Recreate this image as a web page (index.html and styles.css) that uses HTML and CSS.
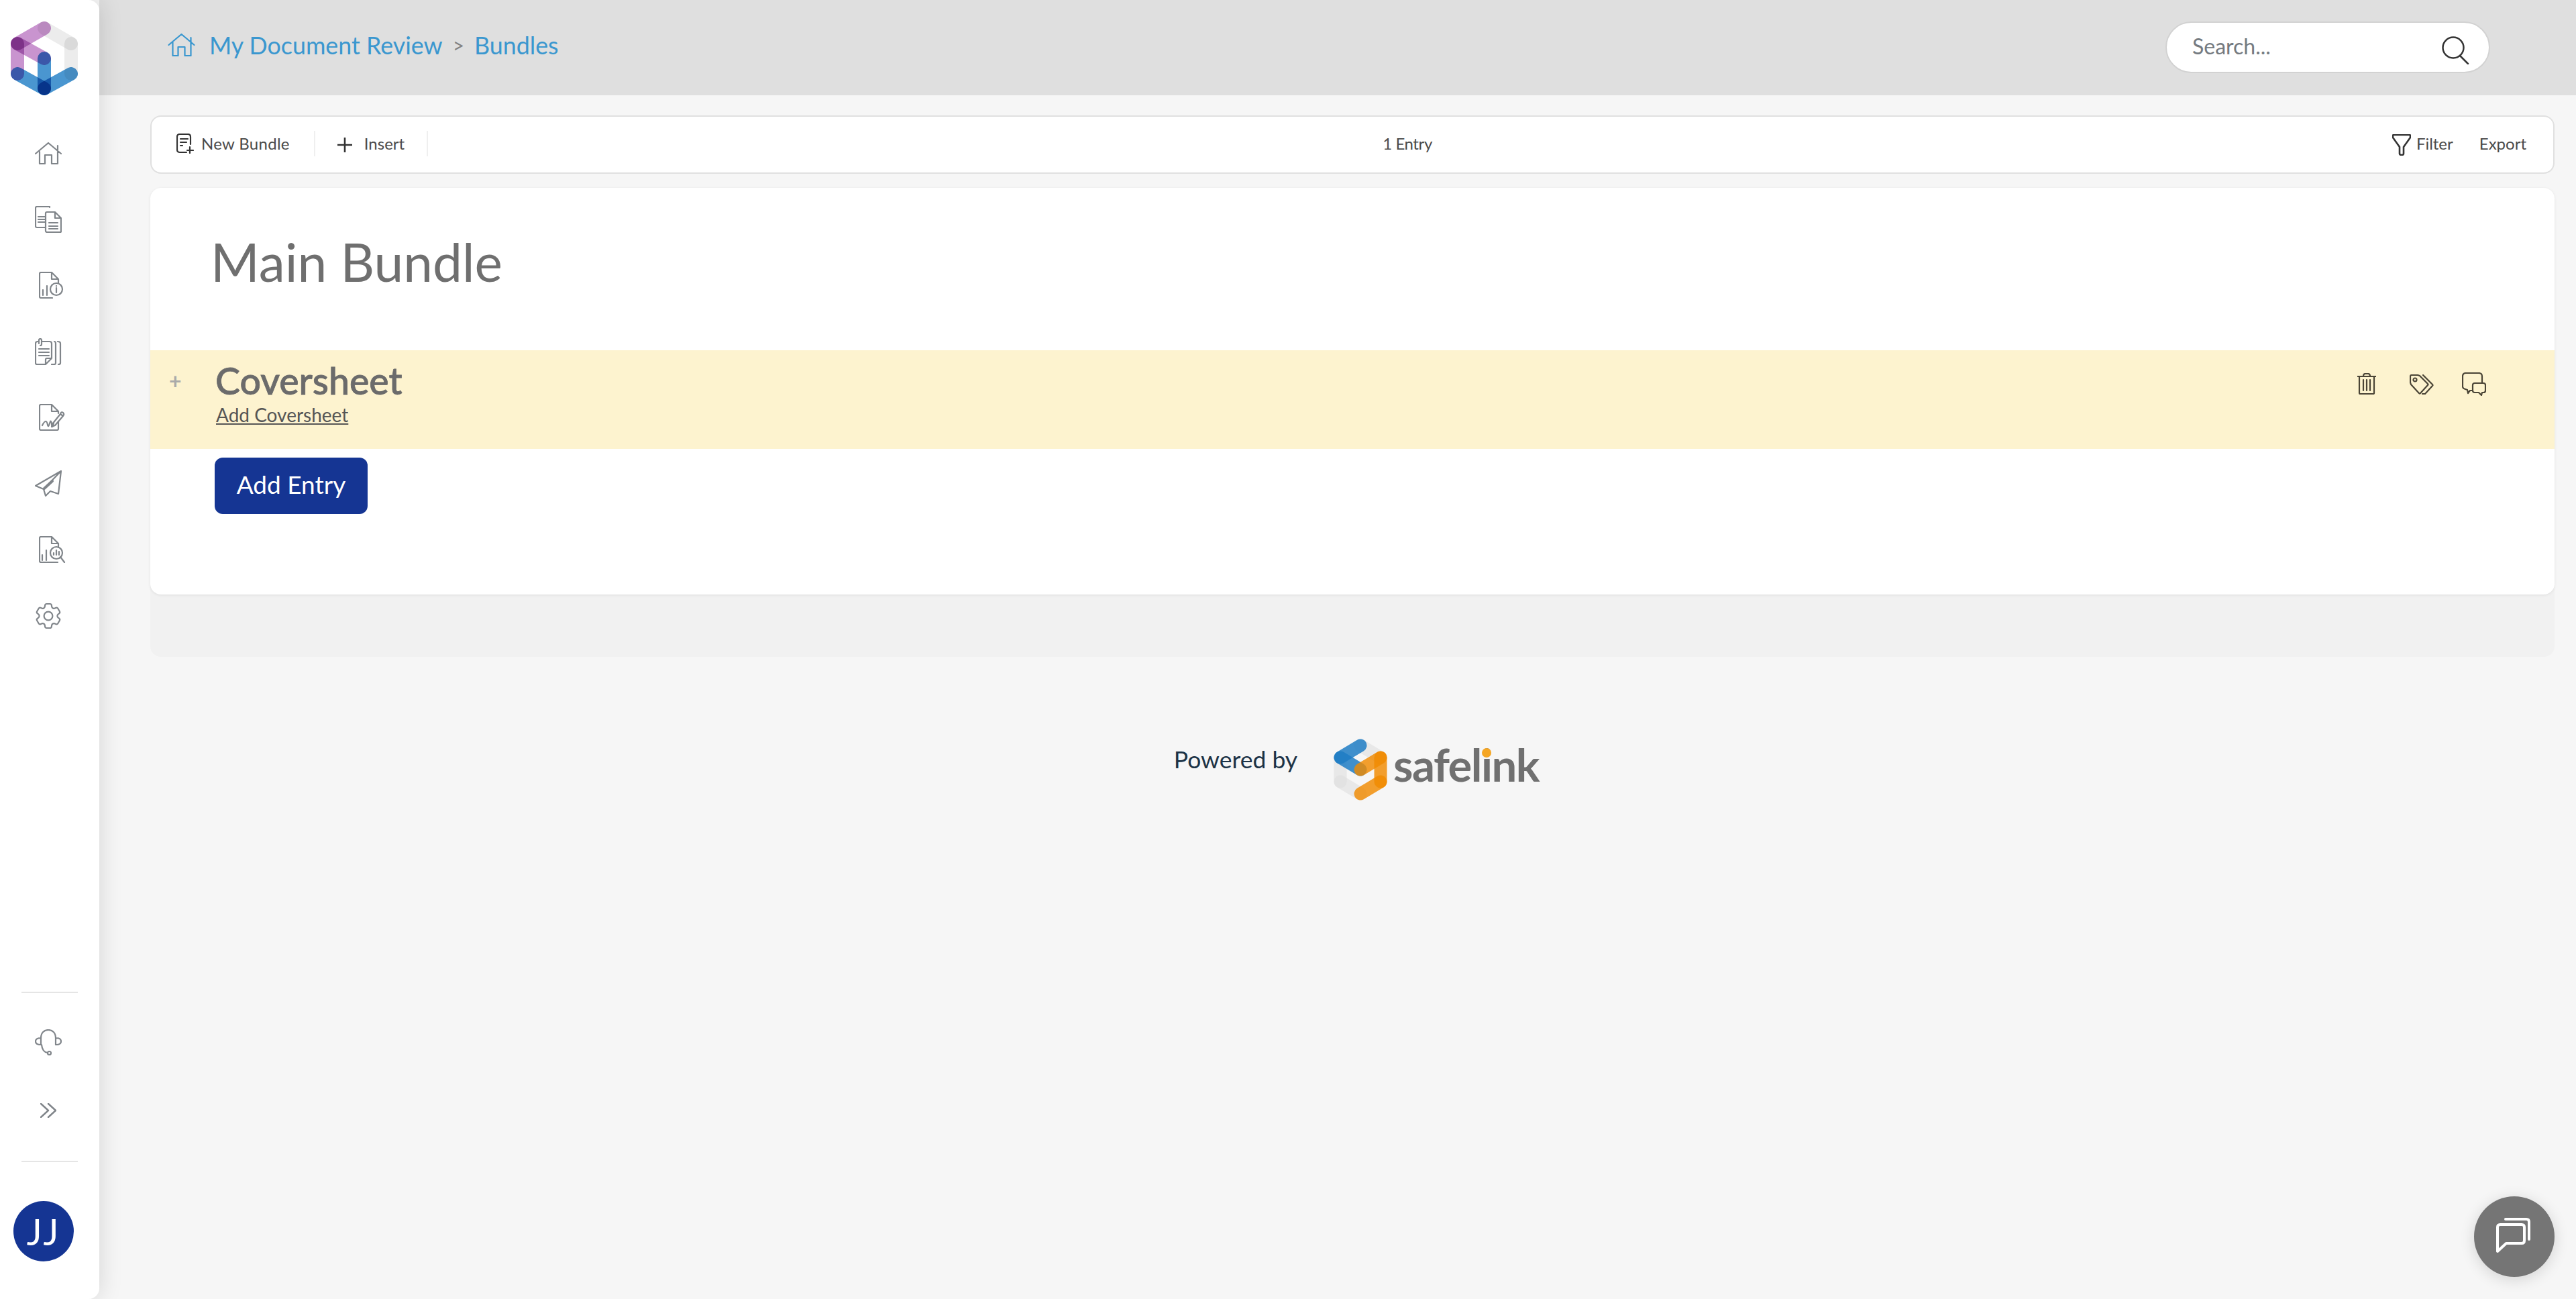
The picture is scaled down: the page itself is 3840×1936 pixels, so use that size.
FILE: index.html
```html
<!DOCTYPE html>
<html lang="en">
<head>
<meta charset="utf-8">
<title>Bundles</title>
<link rel="stylesheet" href="styles.css">
</head>
<body>
<aside class="sidebar">
  <svg class="logo" viewBox="0 0 132 140" fill="none" stroke-linecap="round" stroke-width="20">
    <path class="lg-grey" d="M66 32 106 55"/><path class="lg-grey" d="M106 55V100"/>
    <path class="lg-purple" d="M66 32 26 55"/><path class="lg-purple" d="M26 55 66 77"/><path class="lg-purple" d="M26 55V100"/>
    <path class="lg-blue" d="M26 100 66 122"/><path class="lg-blue" d="M66 77V122"/><path class="lg-blue" d="M106 100 66 122"/>
  </svg>
  <nav class="side-nav">
    <svg class="side-icon" viewBox="0 0 40 40"><path d="M1 21 20 5l19 16M34 9v8M7 18v18h8V23h10v13h9V18"/></svg>
    <svg class="side-icon" viewBox="0 0 40 40"><path d="M22 2V1H3Q1 1 1 3v27q0 2 2 2h13"/><path d="M5 16h10M5 20h10M5 24h10"/><path d="M18 9h12l9 9v20q0 1-1 1H18q-2 0-2-2V11q0-2 2-2zM30 9v9h9M21 25h13M21 30h13M21 34h13"/></svg>
    <svg class="side-icon side-icon-shift" viewBox="0 0 40 40"><path d="M20 39H3q-2 0-2-2V3q0-2 2-2h16l10 10v6M19 1v10h10M6 35v-8M12 35V21"/><circle cx="26" cy="26" r="9"/><path d="M26 24v7M26 21v.5"/></svg>
    <svg class="side-icon" viewBox="0 0 40 40"><path d="M11 5h11q3 0 3 3v22l-9 9H3q-2 0-2-2V8q0-3 3-3h1M25 30h-7q-2 0-2 2v7"/><path d="M6 8V3q0-2 2-2t2 2v6q0 2-2 2M6 16h15M6 21h15M6 26h15"/><path d="M25 39h4q2 0 2-2V8q0-3-2-3M34 5q4 0 4 3v29q0 2-3 2"/></svg>
    <svg class="side-icon side-icon-shift" viewBox="0 0 40 40"><path d="M29 26v11q0 2-2 2H3q-2 0-2-2V3q0-2 2-2h16l10 10v3M19 1v10h10"/><path d="M5 32q3-6 5-6t3 5 3-2 3 1 3-1"/><path d="M20 30 32 15l4 3-12 14-5 2zM32 15q1-4 4-2 3 3-1 5"/></svg>
    <svg class="side-icon" viewBox="0 0 40 40"><path d="M39 1 1 23l12 5 3 10 7-7 12 4zM39 1 13 28"/><path class="icon-thick" d="M26 16 14 27"/></svg>
    <svg class="side-icon side-icon-shift" viewBox="0 0 40 40"><path d="M28 39H3q-2 0-2-2V3q0-2 2-2h16l10 10v6M19 1v10h10M5 36v-8M11 36V21"/><circle cx="26" cy="25" r="9"/><path d="M22 28v-3M26 28v-7M30 28v-5M32 31l6 8"/></svg>
    <svg class="side-icon" viewBox="2 2 20 20"><path class="gear" d="M9.594 3.94c.09-.542.56-.94 1.11-.94h2.593c.55 0 1.02.398 1.11.94l.213 1.281c.063.374.313.686.645.87.074.04.147.083.22.127.325.196.72.257 1.075.124l1.217-.456a1.125 1.125 0 0 1 1.37.49l1.296 2.247a1.125 1.125 0 0 1-.26 1.431l-1.003.827c-.293.241-.438.613-.43.992a7.723 7.723 0 0 1 0 .255c-.008.378.137.75.43.991l1.004.827c.424.35.534.955.26 1.43l-1.298 2.247a1.125 1.125 0 0 1-1.369.491l-1.217-.456c-.355-.133-.75-.072-1.076.124a6.47 6.47 0 0 1-.22.128c-.331.183-.581.495-.644.869l-.213 1.281c-.09.543-.56.94-1.11.94h-2.594c-.55 0-1.019-.398-1.11-.94l-.213-1.281c-.062-.374-.312-.686-.644-.87a6.52 6.52 0 0 1-.22-.127c-.325-.196-.72-.257-1.076-.124l-1.217.456a1.125 1.125 0 0 1-1.369-.49l-1.297-2.247a1.125 1.125 0 0 1 .26-1.431l1.004-.827c.292-.24.437-.613.43-.991a6.932 6.932 0 0 1 0-.255c.007-.38-.138-.751-.43-.992l-1.004-.827a1.125 1.125 0 0 1-.26-1.43l1.297-2.247a1.125 1.125 0 0 1 1.37-.491l1.216.456c.356.133.751.072 1.076-.124.072-.044.146-.086.22-.128.332-.183.582-.495.644-.869l.214-1.28Z"/><circle class="gear" cx="12" cy="12" r="3.2"/></svg>
  </nav>
  <div class="side-bottom">
    <hr class="side-rule">
    <svg class="side-icon headset" viewBox="0 0 40 40"><path d="M9 13C9 5 14 1 20 1s11 4 11 12M9 13v10q-8 0-8-5t8-5zM31 13v10h1q7 0 7-5t-7-5zM10 23q1 11 9 12"/><circle cx="21.500" cy="35.500" r="2.500"/></svg>
    <svg class="chevrons" viewBox="0 0 24 22"><path d="M1 1l11 10L1 21M12 1l11 10-11 10"/></svg>
    <hr class="side-rule side-rule-low">
    <div class="avatar">JJ</div>
  </div>
</aside>

<div class="main">
  <header class="topbar">
    <nav class="crumbs">
      <svg class="crumb-home" viewBox="0 0 40 34"><path d="M1 17 20 1l19 16M34 6v8M7 13v20h8V20h10v13h9V13"/></svg>
      <a class="crumb-link">My Document Review</a>
      <span class="crumb-sep">&gt;</span>
      <a class="crumb-link">Bundles</a>
    </nav>
    <div class="search">
      <span class="search-text">Search...</span>
      <svg class="search-icon" viewBox="0 0 42 42"><circle cx="17" cy="17" r="15.500"/><path d="M27 29l12 12"/></svg>
    </div>
  </header>

  <div class="content">
    <div class="toolbar">
      <div class="tool-group">
        <button class="tool tool-new">
          <svg class="tool-svg-new" viewBox="0 0 26 30"><path d="M15 28H5q-4 0-4-4V5q0-4 4-4h12q4 0 4 4v11M6 8h11M6 13h9M6 18h3M20 20v9M16 25h9"/></svg>
          New Bundle
        </button>
        <button class="tool tool-insert">
          <svg class="tool-svg-plus" viewBox="0 0 22 22"><path d="M11 0v22M0 11h22"/></svg>
          Insert
        </button>
      </div>
      <div class="tool-count">1 Entry</div>
      <div class="tool-group tool-group-right">
        <button class="tool tool-filter">
          <svg class="tool-svg-filter" viewBox="0 0 28 32"><path d="M2 1h24q1 0 1 2v2L17 19v10q0 2-3 2t-3-2V19L1 5V3q0-2 1-2z"/></svg>
          Filter
        </button>
        <button class="tool tool-export">Export</button>
      </div>
    </div>

    <div class="sheet-stack">
      <section class="sheet">
        <h1 class="sheet-title">Main Bundle</h1>
        <div class="cover-row">
          <span class="cover-plus">+</span>
          <div class="cover-text">
            <h2 class="cover-title">Coversheet</h2>
            <a class="cover-link">Add Coversheet</a>
          </div>
          <div class="cover-actions">
            <svg class="act-trash" viewBox="0 0 28 32"><path d="M0 5h28M3 5v25q0 1 1 1h20q1 0 1-1V5M9 5q0-4 3-4h4q3 0 3 4M9 10v16M14 10v16M19 10v16"/></svg>
            <svg class="act-tags" viewBox="0 0 36 30"><path d="M3 1h9l3 1 12 12q1 1 0 2L16 28q-1 1-2 0L2 15 1 12V3q0-2 2-2z"/><circle cx="8" cy="8" r="2.500"/><path d="M20 1l14 14q1 1 0 2L23 29h-4"/></svg>
            <svg class="act-chat" viewBox="0 0 36 36"><path d="M15 27h-3l-3 4-1-5-3-1q-4-1-4-4V6q0-5 5-5h19q5 0 5 5v10"/><path d="M19 16h13q3 0 3 3v8q0 3-3 3h-2l-1 4-4-4h-6q-3 0-3-3v-8q0-3 3-3z"/></svg>
          </div>
        </div>
        <button class="add-entry">Add Entry</button>
      </section>
    </div>

    <footer class="powered">
      <span class="powered-text">Powered by</span>
      <svg class="safelink-mark" viewBox="0 0 80 92" fill="none" stroke-linecap="round" stroke-width="19">
        <path class="sl-grey" d="M40 10 70 28"/><path class="sl-grey" d="M10 28V64"/><path class="sl-grey" d="M10 64 40 82"/>
        <path class="sl-blue" d="M40 10 10 28"/><path class="sl-blue" d="M10 28 40 46"/>
        <path class="sl-orange" d="M40 46 70 28"/><path class="sl-orange" d="M70 28V64"/><path class="sl-orange" d="M70 64 40 82"/>
      </svg>
      <span class="safelink-word">safelink<i class="safelink-dot"></i></span>
    </footer>
  </div>
</div>

<button class="chat-fab" aria-label="Chat">
  <svg class="chat-fab-icon" viewBox="0 0 56 56"><path d="M15 2h31q4 0 4 4v26M3 50V14q0-4 4-4h32q4 0 4 4v20q0 4-4 4H16z"/></svg>
</button>
</body>
</html>
```
FILE: styles.css
```css
* { box-sizing: border-box; }
html, body { margin: 0; height: 100%; }
body {
  display: flex;
  height: 1936px;
  overflow: hidden;
  position: relative;
  background: #f6f6f6;
  font-family: "Lato", "Open Sans", sans-serif;
  color: #4a4a4a;
}

/* sidebar */
.sidebar {
  width: 148px;
  flex: none;
  display: flex;
  flex-direction: column;
  background: #fff;
  border-radius: 0 16px 16px 0;
  box-shadow: 0 0 36px rgba(0, 0, 0, .14);
  z-index: 2;
  position: relative;
}
.logo { display: block; width: 132px; height: 140px; margin-top: 10px; flex: none; }
.lg-grey { stroke: #ececec; mix-blend-mode: multiply; }
.lg-purple { stroke: #c994cf; mix-blend-mode: multiply; }
.lg-blue { stroke: #4a96d0; mix-blend-mode: multiply; }
.side-nav { display: flex; flex-direction: column; align-items: flex-start; gap: 58.500px; padding: 58px 0 0 52px; }
.side-icon { display: block; width: 40px; height: 40px; fill: none; stroke: #80858a; stroke-width: 2.200; stroke-linejoin: round; stroke-linecap: round; }
.side-icon-shift { margin-left: 6px; }
.icon-thick { stroke-width: 4; }
.gear { stroke-width: 1.100; }
.side-bottom { margin-top: auto; display: flex; flex-direction: column; align-items: flex-start; padding: 0 0 56px 0; }
.side-rule { width: 84px; height: 2px; margin: 0 0 0 32px; border: 0; background: #e5e5e5; }
.headset { margin: 54px 0 0 52px; }
.chevrons { display: block; width: 24px; height: 22px; margin: 70px 0 0 60px; fill: none; stroke: #80858a; stroke-width: 2.400; stroke-linecap: round; stroke-linejoin: round; }
.side-rule-low { margin-top: 64px; }
.avatar { width: 90px; height: 90px; margin: 58px 0 0 20px; border-radius: 50%; background: #153593; color: #fff; font-size: 54px; letter-spacing: 3px; display: flex; align-items: center; justify-content: center; }

/* main */
.main { flex: 1; min-width: 0; display: flex; flex-direction: column; }
.topbar { height: 142px; flex: none; background: #dfdfdf; display: flex; align-items: flex-start; justify-content: space-between; padding: 32px 128px 0 102px; }
.crumbs { display: flex; align-items: center; height: 70px; }
.crumb-home { width: 41px; height: 34px; margin-right: 21px; fill: none; stroke: #3a97cf; stroke-width: 2.200; stroke-linejoin: round; stroke-linecap: round; }
.crumb-link { font-size: 35.800px; color: #3a97cf; }
.crumb-sep { font-size: 30px; color: #808080; margin: 0 15px; }
.search { width: 484px; height: 77px; display: flex; align-items: center; justify-content: space-between; padding: 0 28px 4px 38px; background: #fff; border: 2px solid #d2d2d2; border-radius: 39px; }
.search-text { font-size: 32px; color: #747a80; }
.search-icon { width: 42px; height: 42px; margin-top: 12px; fill: none; stroke: #333; stroke-width: 2.500; stroke-linecap: round; }

.content { flex: 1; padding: 30px 32px 0 76px; display: flex; flex-direction: column; }
.toolbar { height: 87px; flex: none; display: flex; align-items: center; background: #fff; border: 2px solid #e0e0e0; border-radius: 16px; padding: 0 38px 4px 37px; }
.tool-group { display: flex; align-items: center; }
.tool { display: flex; align-items: center; height: 38px; padding: 0; border: 0; background: none; font-family: inherit; font-size: 24px; color: #4a4a4a; }
.tool-new { padding-right: 36px; border-right: 2px solid #efefef; letter-spacing: .3px; }
.tool-svg-new { width: 26px; height: 30px; margin-right: 11px; fill: none; stroke: #333; stroke-width: 2.200; stroke-linecap: round; stroke-linejoin: round; }
.tool-insert { padding: 0 33px; border-right: 2px solid #efefef; }
.tool-svg-plus { width: 22px; height: 22px; margin: 4px 18px 0 0; fill: none; stroke: #333; stroke-width: 2.600; }
.tool-count { flex: 1; padding-right: 8px; text-align: center; font-size: 24px; letter-spacing: -.4px; color: #4a4a4a; }
.tool-svg-filter { width: 28px; height: 32px; margin: 4px 8px 0 0; fill: none; stroke: #333; stroke-width: 2.600; stroke-linejoin: round; }
.tool-export { margin-left: 39px; padding-right: 2px; }

.sheet-stack { margin-top: 21px; padding-bottom: 93px; background: #f1f1f1; border-radius: 16px; }
.sheet { height: 606px; background: #fff; border-radius: 16px; box-shadow: 0 1px 4px rgba(0, 0, 0, .08); overflow: hidden; }
.sheet-title { height: 242px; margin: 0; padding: 65px 0 0 90px; font-size: 78.500px; line-height: 90px; font-weight: 400; color: #6f6f6f; }
.cover-row { height: 147px; display: flex; background: #fdf3cf; position: relative; }
.cover-plus { width: 97px; padding: 28px 0 0 28px; font-size: 32px; line-height: 36px; font-weight: 700; color: #aaa; flex: none; }
.cover-text { flex: 1; padding-top: 15px; }
.cover-title { margin: 0; font-size: 55.500px; line-height: 60px; font-weight: 500; color: #6b6b6b; -webkit-text-stroke: .8px #6b6b6b; }
.cover-link { display: inline-block; margin: 4px 0 0 1px; font-size: 28px; line-height: 34px; color: #555; text-decoration: underline; }
.cover-actions { display: flex; align-items: flex-start; padding: 33px 102px 0 0; }
.act-trash, .act-tags, .act-chat { fill: none; stroke: #4a4436; stroke-width: 2.200; stroke-linejoin: round; stroke-linecap: round; }
.act-trash { width: 28px; height: 32px; margin-top: 1px; }
.act-tags { width: 36px; height: 30px; margin: 3px 0 0 50px; }
.act-chat { width: 36px; height: 36px; margin-left: 42px; }
.add-entry { display: block; width: 228px; height: 84px; margin: 13px 0 0 96px; padding: 0 0 6px; border: 0; border-radius: 12px; background: #153593; color: #fff; font-family: inherit; font-size: 37px; }

.powered { display: flex; align-items: flex-start; justify-content: center; margin-top: 122px; padding-left: 12px; }
.powered-text { font-size: 35.500px; line-height: 40px; margin-top: 11px; color: #1c3347; }
.safelink-mark { width: 80px; height: 92px; margin-left: 54px; flex: none; }
.sl-grey { stroke: #dcdcdc; stroke-opacity: .55; }
.sl-blue { stroke: #1f7cc4; stroke-opacity: .85; }
.sl-orange { stroke: #f08a00; stroke-opacity: .82; }
.safelink-word { position: relative; margin: 2px 0 0 9px; font-size: 67px; line-height: 72px; font-weight: 700; color: #707070; letter-spacing: -1.500px; }
.safelink-dot { position: absolute; left: 132px; top: 12px; width: 14px; height: 14px; border-radius: 50%; background: #f5a623; }

.chat-fab { position: absolute; right: 32px; bottom: 33px; width: 120px; height: 120px; padding: 0; border: 0; border-radius: 50%; background: #757575; box-shadow: 0 4px 22px rgba(0, 0, 0, .14); display: flex; align-items: center; justify-content: center; }
.chat-fab-icon { width: 56px; height: 56px; fill: none; stroke: #fff; stroke-width: 4; stroke-linecap: round; stroke-linejoin: round; }
```
